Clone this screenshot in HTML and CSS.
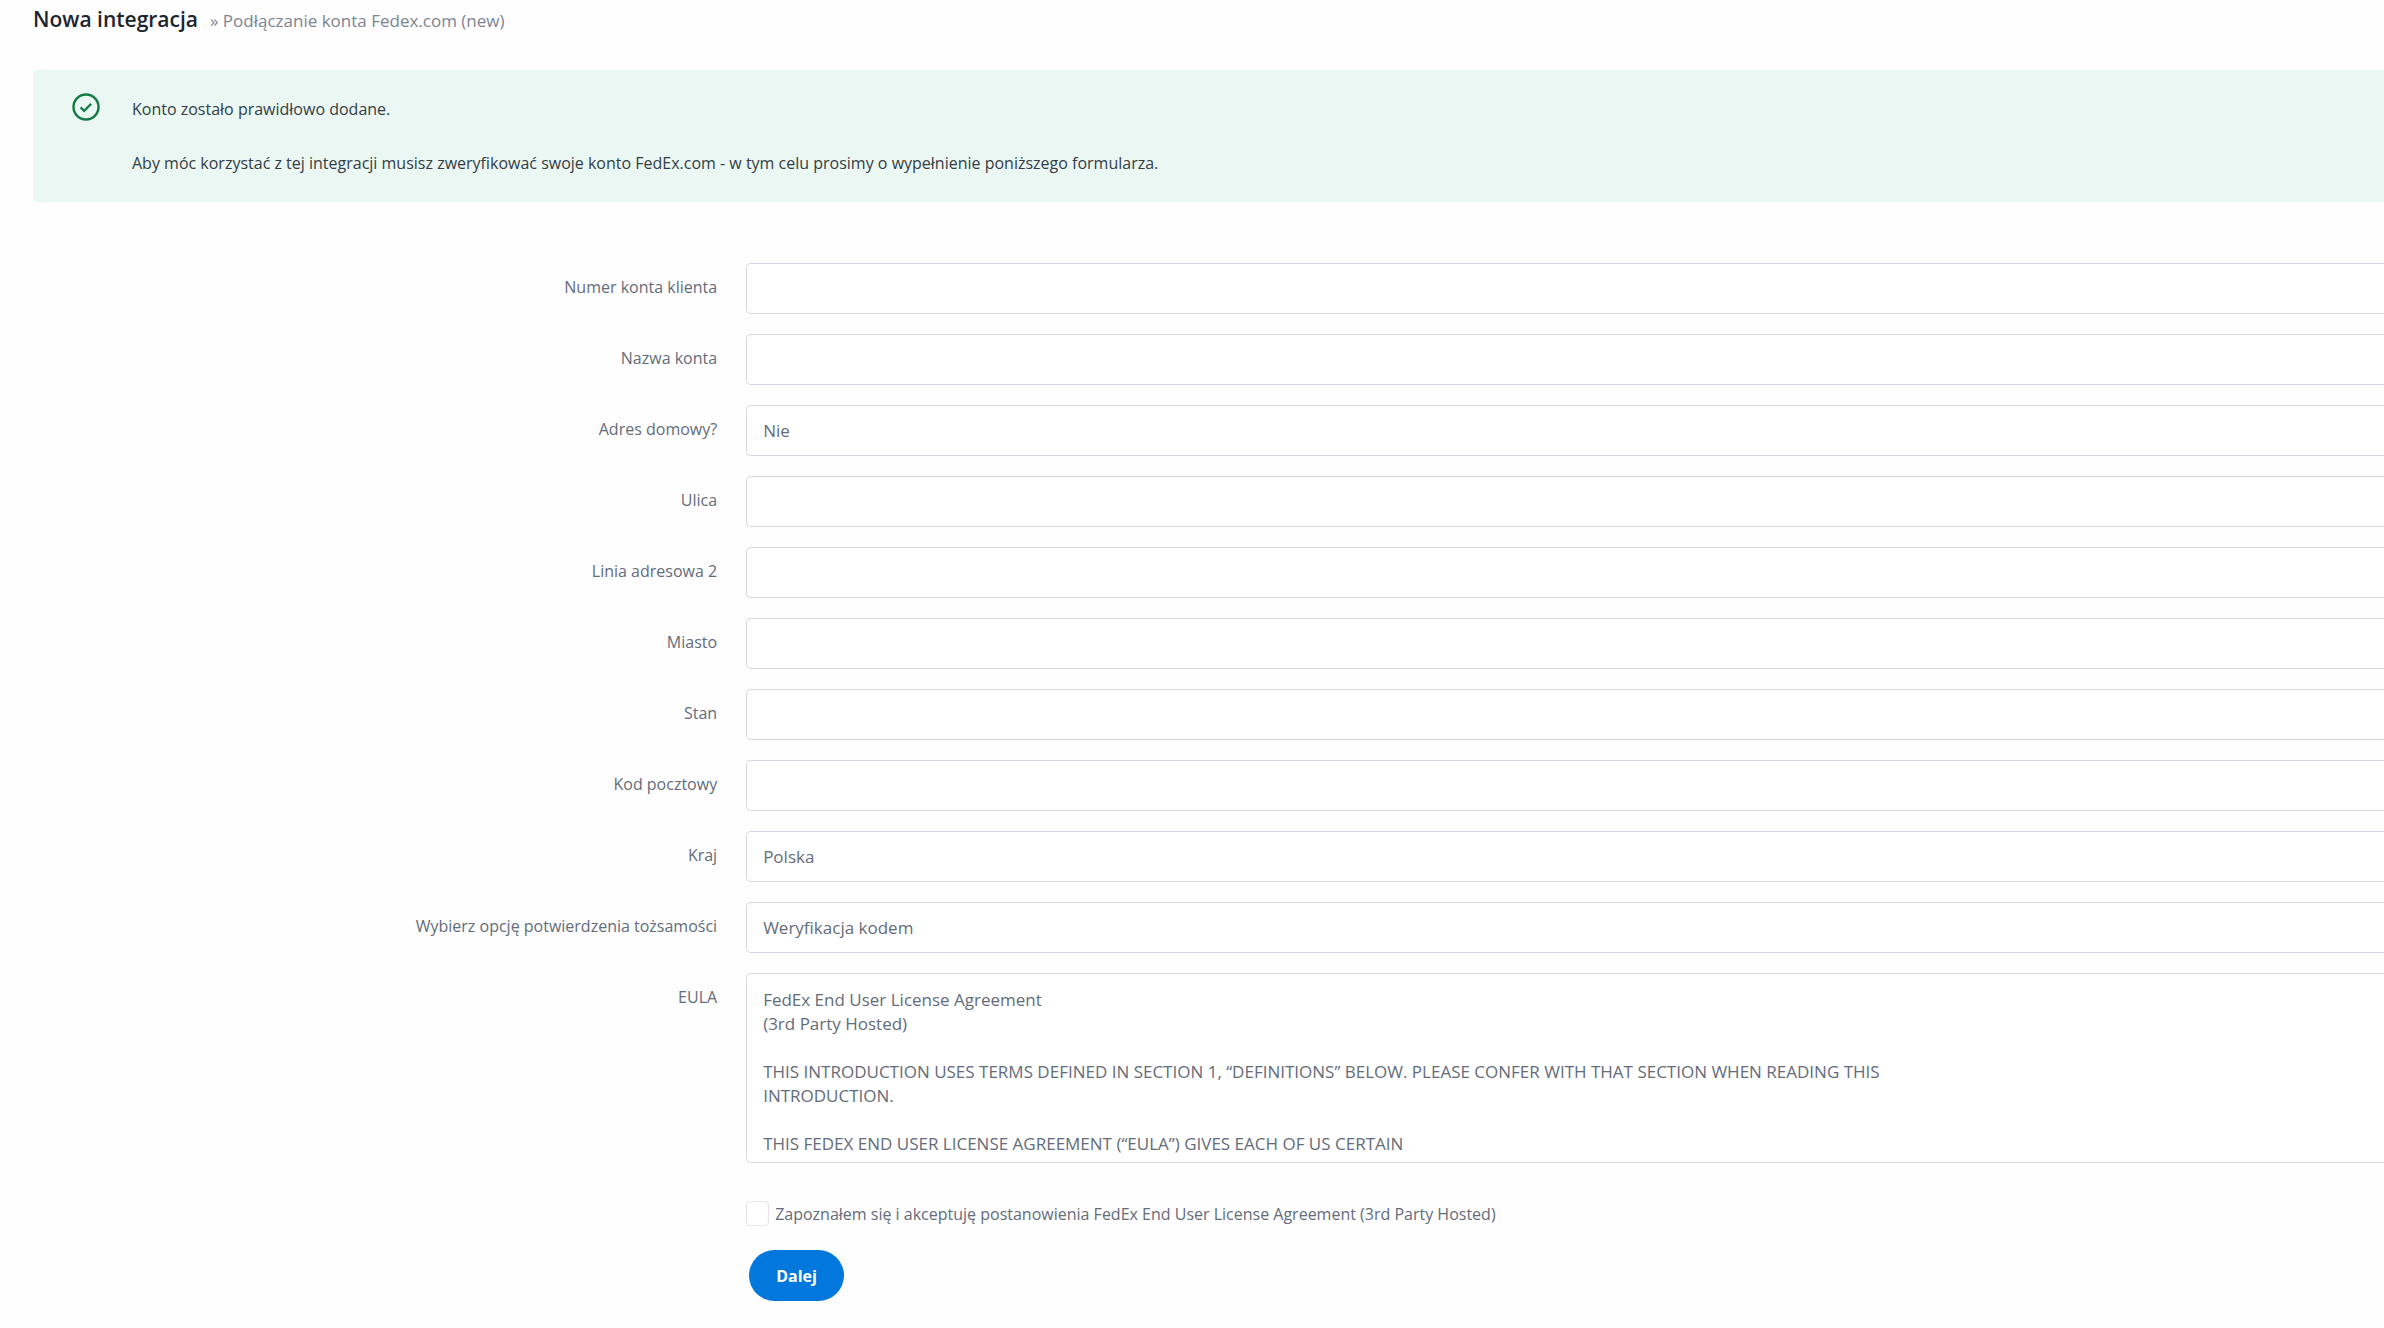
FILE: index.html
```html
<!DOCTYPE html>
<html lang="pl">
<head>
<meta charset="utf-8">
<meta name="viewport" content="width=device-width, initial-scale=1">
<title>Nowa integracja</title>
<link rel="stylesheet" href="styles.css">
</head>
<body>
<main class="page">
  <header class="page-header">
    <h1 class="page-title">Nowa integracja</h1>
    <span class="page-subtitle">» Podłączanie konta Fedex.com (new)</span>
  </header>

  <section class="alert" role="status">
    <svg class="alert-icon" viewBox="0 0 28 28" fill="none" stroke="currentColor" aria-hidden="true">
      <circle cx="14" cy="14" r="12.5" stroke-width="2.4"/>
      <path d="M8.6 14.4l3.6 3.5 7-7.2" stroke-width="2.3"/>
    </svg>
    <div class="alert-text">
      <p>Konto zostało prawidłowo dodane.</p>
      <p>Aby móc korzystać z tej integracji musisz zweryfikować swoje konto FedEx.com - w tym celu prosimy o wypełnienie poniższego formularza.</p>
    </div>
  </section>

  <form class="form">
    <label class="label" for="account-number">Numer konta klienta</label>
    <input class="control" id="account-number" type="text">
    <label class="label" for="account-name">Nazwa konta</label>
    <input class="control" id="account-name" type="text">
    <label class="label" for="residential">Adres domowy?</label>
    <select class="control" id="residential"><option>Nie</option><option>Tak</option></select>
    <label class="label" for="street">Ulica</label>
    <input class="control" id="street" type="text">
    <label class="label" for="address2">Linia adresowa 2</label>
    <input class="control" id="address2" type="text">
    <label class="label" for="city">Miasto</label>
    <input class="control" id="city" type="text">
    <label class="label" for="state">Stan</label>
    <input class="control" id="state" type="text">
    <label class="label" for="postcode">Kod pocztowy</label>
    <input class="control" id="postcode" type="text">
    <label class="label" for="country">Kraj</label>
    <select class="control" id="country"><option>Polska</option></select>
    <label class="label" for="verification">Wybierz opcję potwierdzenia tożsamości</label>
    <select class="control" id="verification"><option>Weryfikacja kodem</option></select>
    <label class="label" for="eula">EULA</label>
    <textarea class="control control-area" id="eula" readonly>FedEx End User License Agreement
(3rd Party Hosted)

THIS INTRODUCTION USES TERMS DEFINED IN SECTION 1, “DEFINITIONS” BELOW. PLEASE CONFER WITH THAT SECTION WHEN READING THIS
INTRODUCTION.

THIS FEDEX END USER LICENSE AGREEMENT (“EULA”) GIVES EACH OF US CERTAIN</textarea>
    <div class="consent">
      <input class="checkbox" id="accept" type="checkbox">
      <label class="consent-label" for="accept">Zapoznałem się i akceptuję postanowienia FedEx End User License Agreement (3rd Party Hosted)</label>
    </div>
    <div class="actions"><button class="button" type="submit">Dalej</button></div>
  </form>
</main>
</body>
</html>
```
FILE: styles.css
```css
*, *::before, *::after {
  box-sizing: border-box;
}

body {
  margin: 0;
  background: #fefefe;
  color: #646c7a;
  font-family: "Open Sans", "Noto Sans", sans-serif;
  font-size: 17px;
  line-height: 24px;
}

.page {
  padding: 5px 0 24px 33px;
}

.page-header {
  display: flex;
  align-items: baseline;
  gap: 12px;
  height: 65px;
}

.page-title {
  margin: 0;
  color: #1d2530;
  font-size: 21px;
  font-weight: 600;
  line-height: 28px;
}

.page-subtitle {
  color: #7d8492;
}

.alert {
  display: flex;
  gap: 32px;
  padding: 23px 0 23px 39px;
  border-radius: 5px 0 0 5px;
  background: #eaf7f3;
  color: #343d45;
  font-size: 16px;
}

.alert-icon {
  flex: none;
  width: 28px;
  height: 28px;
  color: #147a45;
}

.alert-text {
  display: grid;
  gap: 30px;
  padding: 4px 0;
}

.alert-text p {
  margin: 0;
}

.form {
  display: grid;
  grid-template-columns: 29.1% 1fr;
  column-gap: 29px;
  row-gap: 20px;
  margin-top: 61px;
}

.label {
  padding-top: 12px;
  font-size: 16px;
  text-align: right;
}

.control {
  appearance: none;
  width: 100%;
  height: 51px;
  margin: 0;
  padding: 0 16px;
  border: 1px solid #d5d8e2;
  border-right: 0;
  border-radius: 5px 0 0 5px;
  background: #fff;
  color: #646c7a;
  font: inherit;
}

.control-area {
  display: block;
  height: 190px;
  padding: 14px 16px;
  overflow: hidden;
  resize: none;
}

.consent {
  display: flex;
  grid-column: 2;
  align-items: center;
  gap: 6px;
  margin-top: 18px;
  font-size: 16px;
}

.checkbox {
  appearance: none;
  flex: none;
  width: 23px;
  height: 25px;
  margin: 0;
  border: 1px solid #e2e4ea;
  border-radius: 4px;
  background: #fff;
}

.actions {
  grid-column: 2;
  padding: 4px 3px;
}

.button {
  height: 51px;
  padding: 0 27px;
  border: 0;
  border-radius: 26px;
  background: #0277dc;
  color: #fff;
  font: inherit;
  font-size: 16px;
  font-weight: 700;
}
```
